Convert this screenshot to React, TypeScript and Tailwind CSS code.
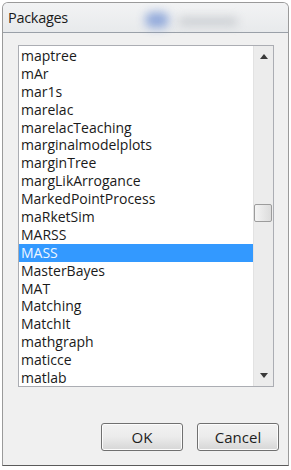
import React from "react";

const PACKAGES = [
  "maptree",
  "mAr",
  "mar1s",
  "marelac",
  "marelacTeaching",
  "marginalmodelplots",
  "marginTree",
  "margLikArrogance",
  "MarkedPointProcess",
  "maRketSim",
  "MARSS",
  "MASS",
  "MasterBayes",
  "MAT",
  "Matching",
  "MatchIt",
  "mathgraph",
  "maticce",
  "matlab",
];

const SELECTED = "MASS";

function Arrow({ down = false }: { down?: boolean }) {
  return (
    <svg width="8" height="5" viewBox="0 0 8 5" className="block">
      {down ? <path d="M0 0 H8 L4 5 Z" fill="#3a3a3a" /> : <path d="M0 5 H8 L4 0 Z" fill="#3a3a3a" />}
    </svg>
  );
}

function DialogButton({ label }: { label: string }) {
  return (
    <button className="w-[82px] h-[28px] rounded-[3px] border border-[#707070] bg-gradient-to-b from-[#f2f2f2] via-[#ebebeb] to-[#d6d6d6] text-[15px] text-[#1e1e1e] shadow-[inset_0_0_0_1px_#fcfcfc]">
      {label}
    </button>
  );
}

export default function App() {
  return (
    <div className="w-[291px] h-[470px] bg-white pt-[2px] px-[2px] pb-[4px] font-['Open_Sans',sans-serif]">
      <div className="h-full flex flex-col rounded-t-[6px] border border-[#9a9a9a] border-b-[#5a5a5a] bg-[#e9ecef] overflow-hidden">
        {/* Title bar (glass) */}
        <div className="relative h-[29px] shrink-0 flex items-center pl-[5px] bg-gradient-to-b from-[#f2f3f4] to-[#e8eaec]">
          <div className="absolute left-[142px] top-[9px] w-[24px] h-[16px] rounded-full bg-[#7d9ad6] blur-[5px] opacity-80" />
          <div className="absolute left-[175px] top-[14px] w-[60px] h-[9px] rounded-full bg-[#b8bcc2] blur-[5px] opacity-60" />
          <span className="relative text-[14.5px] text-[#1b1b1b] tracking-[-0.3px]">Packages</span>
        </div>

        {/* Client area */}
        <div className="flex-1 flex flex-col bg-[#f0f0f0] border-t border-[#9aa0a8] pl-[15px] pr-[14px] pt-[12px]">
          <div className="h-[342px] flex border border-[#abadb3] bg-white">
            <div className="flex-1 pt-[1px] text-[14px] text-[#1a1a1a] leading-[17.9px]">
              {PACKAGES.map((name) => (
                <div
                  key={name}
                  className={
                    name === SELECTED
                      ? "h-[17.9px] pl-[2px] bg-[#3399ff] text-[#eef6ff]"
                      : "h-[17.9px] pl-[2px]"
                  }
                >
                  {name}
                </div>
              ))}
            </div>

            {/* Scrollbar */}
            <div className="w-[20px] flex flex-col items-center bg-[#ececec] border-l border-[#e2e2e2]">
              <div className="h-[18px] flex items-center justify-center pt-[3px]">
                <Arrow />
              </div>
              <div className="flex-1 w-full relative">
                <div className="absolute left-[0px] top-[140px] w-[18px] h-[18px] rounded-[2px] border border-[#9c9c9c] bg-gradient-to-r from-[#f4f4f4] to-[#dcdcdc]" />
              </div>
              <div className="h-[18px] flex items-center justify-center pb-[4px]">
                <Arrow down />
              </div>
            </div>
          </div>

          <div className="flex justify-end gap-[14px] mt-[36px] mr-[-5px]">
            <DialogButton label="OK" />
            <DialogButton label="Cancel" />
          </div>
        </div>
      </div>
    </div>
  );
}
